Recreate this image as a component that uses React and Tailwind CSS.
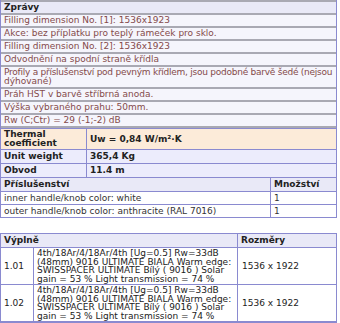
export default function App() {
  const messages = [
    'Filling dimension No. [1]: 1536x1923',
    'Akce: bez příplatku pro teplý rámeček pro sklo.',
    'Filling dimension No. [2]: 1536x1923',
    'Odvodnění na spodní straně křídla',
  ];
  const messages2 = [
    'Práh HST v barvě stříbrná anoda.',
    'Výška vybraného prahu: 50mm.',
    'Rw (C;Ctr) = 29 (-1;-2) dB',
  ];

  const glass = '4th/18Ar/4/18Ar/4th [Ug=0.5] Rw=33dB (48mm) 9016 ULTIMATE BIALA Warm edge: SWISSPACER ULTIMATE Bílý ( 9016 ) Solar gain = 53 % Light transmission = 74 %';

  const msgRow = 'bg-[#f5f5fc] px-[3px] py-[1px] text-[#844a4a] border-b-2 border-[#a9a9b3]';

  return (
    <div className="w-[340px] h-[323px] overflow-hidden bg-white font-['DejaVu_Sans',sans-serif] text-[9px] leading-[9px]">
      <div className="w-[337px] border-x border-[#8a8ad0]">
        <div className="h-[2px] bg-[#f4f4fc] border-b-2 border-[#a9a9b3]" />
        <div className="bg-[#e9e9f7] px-[3px] py-[1px] font-bold text-[#222] border-b-2 border-[#a9a9b3]">Zprávy</div>
        {messages.map((m) => (
          <div key={m} className={msgRow}>{m}</div>
        ))}
        <div className={msgRow}>
          <div className="whitespace-nowrap tracking-[-0.25px]">
            Profily a příslušenství pod pevným křídlem, jsou podobné barvě šedé (nejsou
          </div>
          <div>dýhované)</div>
        </div>
        {messages2.map((m) => (
          <div key={m} className={msgRow}>{m}</div>
        ))}

        <div className="grid grid-cols-[86px_1fr] bg-[#fcebd9] border-y border-[#8a8ad0] font-bold text-[#222]">
          <div className="px-[3px] py-[1px] border-r border-[#8a8ad0]">Thermal<br />coefficient</div>
          <div className="px-[3px] flex items-center">Uw = 0,84 W/m²·K</div>
        </div>
        <div className="grid grid-cols-[86px_1fr] bg-[#ececfc] border-b border-[#8a8ad0] font-bold text-[#222]">
          <div className="px-[3px] py-[2px] border-r border-[#8a8ad0]">Unit weight</div>
          <div className="px-[3px] py-[2px]">365,4 Kg</div>
        </div>
        <div className="grid grid-cols-[86px_1fr] bg-[#ececfc] border-b border-[#8a8ad0] font-bold text-[#222]">
          <div className="px-[3px] py-[2px] border-r border-[#8a8ad0]">Obvod</div>
          <div className="px-[3px] py-[2px]">11.4 m</div>
        </div>

        <div className="grid grid-cols-[270px_1fr] bg-[#e9e9f7] border-b border-[#8a8ad0] font-bold text-[#222]">
          <div className="px-[3px] py-[2px] border-r border-[#8a8ad0]">Příslušenství</div>
          <div className="px-[3px] py-[2px]">Množství</div>
        </div>
        <div className="grid grid-cols-[270px_1fr] bg-white border-b border-[#8a8ad0] text-[#333] leading-[10px]">
          <div className="px-[3px] py-[1px] border-r border-[#8a8ad0]">inner handle/knob color: white</div>
          <div className="px-[3px] py-[1px]">1</div>
        </div>
        <div className="grid grid-cols-[270px_1fr] bg-white border-b border-[#8a8ad0] text-[#333] leading-[10px]">
          <div className="px-[3px] py-[1px] border-r border-[#8a8ad0]">outer handle/knob color: anthracite (RAL 7016)</div>
          <div className="px-[3px] py-[1px]">1</div>
        </div>
      </div>

      <div className="mt-[15px] w-[337px] border border-[#8a8ad0]">
        <div className="grid grid-cols-[237px_1fr] bg-[#e9e9f7] border-b border-[#8a8ad0] font-bold text-[#222]">
          <div className="px-[3px] py-[2px] border-r border-[#8a8ad0]">Výplně</div>
          <div className="px-[3px] py-[2px]">Rozměry</div>
        </div>
        {['1.01', '1.02'].map((n) => (
          <div key={n} className="grid grid-cols-[33px_204px_1fr] bg-white border-b border-[#8a8ad0] text-[#222]">
            <div className="px-[3px] flex items-center border-r border-[#8a8ad0]">{n}</div>
            <div className="px-[3px] py-[1px] leading-[8.5px] border-r border-[#8a8ad0]">{glass}</div>
            <div className="px-[4px] flex items-center">1536 x 1922</div>
          </div>
        ))}
      </div>
    </div>
  );
}
